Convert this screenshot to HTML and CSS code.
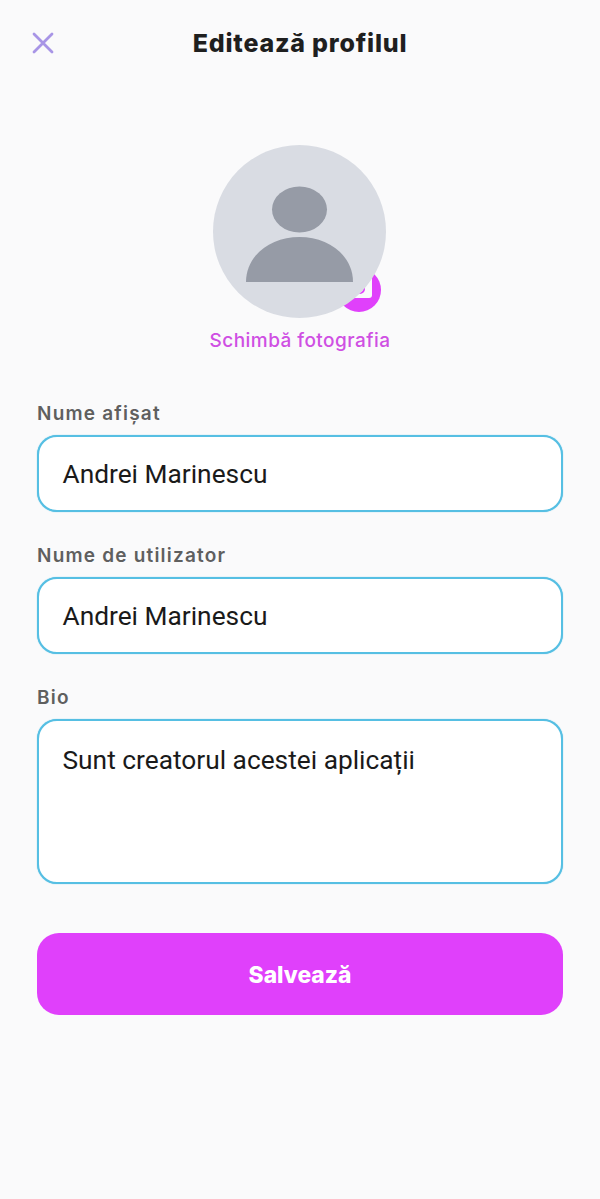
FILE: index.html
```html
<!DOCTYPE html>
<html lang="ro">
<head>
    <meta charset="UTF-8">
    <meta name="viewport" content="width=device-width, initial-scale=1.0">
    <title>Editează profilul</title>
    <link rel="stylesheet" href="styles.css">
</head>
<body>
    <header class="top-bar">
        <svg class="close-icon" width="24" height="24" viewBox="0 0 24 24">
            <path d="M3 3 L21 21 M21 3 L3 21" />
        </svg>
        <h1 class="title">Editează profilul</h1>
    </header>

    <section class="photo">
        <div class="avatar-wrap">
            <div class="camera-badge"><span class="camera-square"><span class="camera-lens"></span></span></div>
            <div class="avatar">
                <svg width="173" height="173" viewBox="0 0 173 173">
                    <ellipse cx="86.5" cy="64.5" rx="27.5" ry="23" />
                    <path d="M33 137 C33 110 58 92 86.5 92 C115 92 140 110 140 137 Z" />
                </svg>
            </div>
        </div>
        <div class="photo-link">Schimbă fotografia</div>
    </section>

    <form class="form">
        <div class="field">
            <label class="field-label">Nume afișat</label>
            <div class="input">Andrei Marinescu</div>
        </div>
        <div class="field">
            <label class="field-label">Nume de utilizator</label>
            <div class="input">Andrei Marinescu</div>
        </div>
        <div class="field">
            <label class="field-label">Bio</label>
            <div class="input input-bio">Sunt creatorul acestei aplicații</div>
        </div>
        <button class="save-button" type="button">Salvează</button>
    </form>
</body>
</html>
```

FILE: styles.css
```css
html, body {
    height: 100%;
}

body {
    margin: 0;
    background-color: #fafafb;
    font-family: Roboto, "Liberation Sans", sans-serif;
    color: #1a1a1a;
    overflow: hidden;
}

.top-bar {
    display: flex;
    align-items: center;
    justify-content: center;
    height: 32px;
    padding-top: 28px;
    position: relative;
}

.close-icon {
    position: absolute;
    left: 31px;
    top: 31px;
}

.close-icon path {
    fill: none;
    stroke: #a895e6;
    stroke-width: 2.8;
    stroke-linecap: round;
}

.title {
    margin: -3px 0 0;
    font-family: Inter, sans-serif;
    font-size: 25px;
    font-weight: 800;
    letter-spacing: 0.8px;
    color: #1f1f1f;
}

.photo {
    display: flex;
    flex-direction: column;
    align-items: center;
    padding-top: 85px;
}

.avatar-wrap {
    position: relative;
    width: 173px;
    height: 173px;
    margin-right: 1px;
}

.avatar {
    position: relative;
    width: 173px;
    height: 173px;
    border-radius: 50%;
    background-color: #d9dce3;
}

.avatar svg {
    display: block;
    fill: #969ba6;
}

.camera-badge {
    position: absolute;
    left: 124px;
    top: 123px;
    width: 44px;
    height: 44px;
    border-radius: 50%;
    background-color: #e040fb;
}

.camera-square {
    position: absolute;
    left: 13px;
    top: 8px;
    width: 22px;
    height: 22px;
    border-radius: 3px;
    background-color: #fafafb;
}

.camera-lens {
    position: absolute;
    left: 5px;
    top: 8px;
    box-sizing: border-box;
    width: 10px;
    height: 10px;
    border: 2px solid #e040fb;
    border-radius: 50%;
}

.photo-link {
    margin-top: 12px;
    font-family: Inter, sans-serif;
    font-size: 19px;
    font-weight: 500;
    line-height: 22px;
    letter-spacing: 0.45px;
    color: #cf4fe3;
}

.form {
    display: flex;
    flex-direction: column;
    padding: 0 37px;
    margin-top: 51px;
}

.field {
    margin-bottom: 33px;
}

.field-label {
    display: block;
    font-family: Inter, sans-serif;
    font-size: 19px;
    font-weight: 600;
    line-height: 22px;
    letter-spacing: 1.2px;
    color: #5f5f5f;
    margin-bottom: 10px;
}

.input {
    box-sizing: border-box;
    height: 77px;
    padding: 0 24px 0 23.5px;
    border: 2px solid #56bfe3;
    border-radius: 20px;
    background-color: #fff;
    box-shadow: 0 0 1px #56bfe3;
    font-size: 26.3px;
    line-height: 74px;
    color: #1a1a1a;
}

.input-bio {
    height: 165px;
    line-height: 30px;
    padding-top: 24px;
}

.save-button {
    height: 82px;
    margin-top: 16px;
    border: none;
    border-radius: 22px;
    background-color: #e040fb;
    font-family: Inter, sans-serif;
    font-size: 22.8px;
    font-weight: 800;
    color: #fff;
}
```
